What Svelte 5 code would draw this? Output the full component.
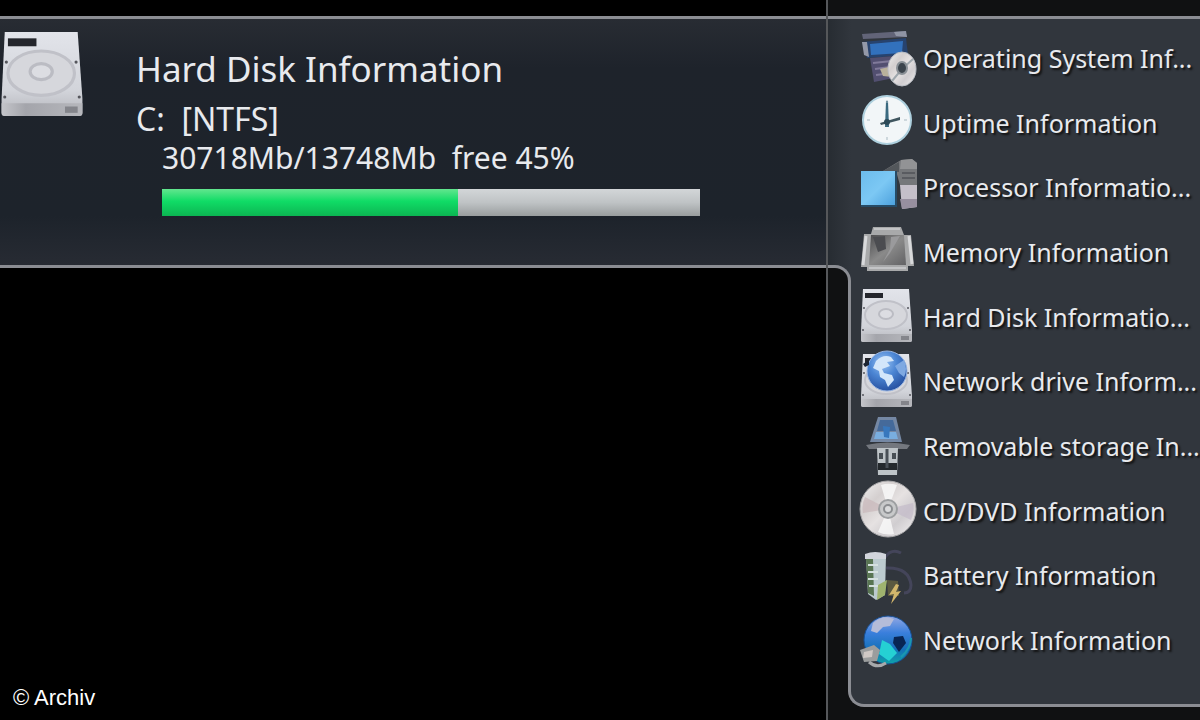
<script lang="ts">
	type Item = { icon: string; label: string };

	const items: Item[] = [
		{ icon: 'system', label: 'Operating System Inf...' },
		{ icon: 'clock', label: 'Uptime Information' },
		{ icon: 'processor', label: 'Processor Informatio...' },
		{ icon: 'memory', label: 'Memory Information' },
		{ icon: 'disk', label: 'Hard Disk Informatio...' },
		{ icon: 'netdrive', label: 'Network drive Inform...' },
		{ icon: 'usb', label: 'Removable storage In...' },
		{ icon: 'cd', label: 'CD/DVD Information' },
		{ icon: 'battery', label: 'Battery Information' },
		{ icon: 'network', label: 'Network Information' }
	];

	const drive = { name: 'C:', fs: '[NTFS]', total: 30718, used: 13748, free: 45 };
</script>

<!-- gradients shared by all icons -->
<svg class="defs" width="0" height="0" aria-hidden="true">
	<defs>
		<linearGradient id="metal" x1="0" y1="0" x2="0" y2="1">
			<stop offset="0" stop-color="#e2e4ea" />
			<stop offset="0.7" stop-color="#d2d4da" />
			<stop offset="1" stop-color="#b4b5bb" />
		</linearGradient>
		<linearGradient id="side" x1="0" y1="0" x2="1" y2="0">
			<stop offset="0" stop-color="#c4c5ca" />
			<stop offset="0.3" stop-color="#a4a5ab" />
			<stop offset="1" stop-color="#b6b7bc" />
		</linearGradient>
		<linearGradient id="screen" x1="0" y1="0" x2="1" y2="1">
			<stop offset="0" stop-color="#6cbcec" />
			<stop offset="0.5" stop-color="#7cc8f4" />
			<stop offset="1" stop-color="#4a9fdc" />
		</linearGradient>
		<linearGradient id="chip" x1="0" y1="0" x2="1" y2="1">
			<stop offset="0" stop-color="#4c4c4e" />
			<stop offset="0.5" stop-color="#8a8a8a" />
			<stop offset="1" stop-color="#626264" />
		</linearGradient>
		<linearGradient id="disc" x1="0" y1="0" x2="1" y2="1">
			<stop offset="0" stop-color="#f2f2f2" />
			<stop offset="0.3" stop-color="#d4cfcf" />
			<stop offset="0.5" stop-color="#e6e2e2" />
			<stop offset="0.7" stop-color="#d0cdd0" />
			<stop offset="1" stop-color="#f4f2f2" />
		</linearGradient>
		<radialGradient id="globe" cx="0.4" cy="0.3" r="0.75">
			<stop offset="0" stop-color="#9cc4f4" />
			<stop offset="0.45" stop-color="#4c86d4" />
			<stop offset="1" stop-color="#234c9c" />
		</radialGradient>
		<linearGradient id="earth" x1="0" y1="0" x2="0" y2="1">
			<stop offset="0" stop-color="#93a8e4" />
			<stop offset="0.35" stop-color="#3a7fdc" />
			<stop offset="0.7" stop-color="#1470b8" />
			<stop offset="1" stop-color="#0fa3a8" />
		</linearGradient>
	</defs>
</svg>

{#snippet disk()}
	<path d="M5 1 H51 L54 43 V52 Q54 54 52 54 H5 Q3 54 3 52 V43 Z" fill="url(#metal)" />
	<path d="M3 46 H54 V52 Q54 54 52 54 H5 Q3 54 3 52 Z" fill="url(#side)" />
	<ellipse cx="28" cy="27" rx="21" ry="14" fill="#d6d7dc" stroke="#c0c1c8" stroke-width="2" />
	<ellipse cx="28" cy="26" rx="7" ry="5" fill="#dcdde2" stroke="#bbbcc3" stroke-width="2" />
	<rect x="7" y="5" width="18" height="5" fill="#24262c" />
	<circle cx="6" cy="20" r="1" fill="#55565c" />
	<circle cx="50" cy="20" r="1" fill="#55565c" />
	<circle cx="5" cy="42" r="1" fill="#55565c" />
	<circle cx="52" cy="42" r="1" fill="#55565c" />
	<rect x="43" y="48" width="8" height="4" fill="#84858b" />
{/snippet}

<div class="desktop">
	<main>
		<section class="panel">
			<svg class="drive" viewBox="2 0 53 55" aria-hidden="true">{@render disk()}</svg>
			<div class="info">
				<h1>Hard Disk Information</h1>
				<p class="name">{drive.name}&nbsp; {drive.fs}</p>
				<div class="usage">
					<label for="space">{drive.total}Mb/{drive.used}Mb&nbsp; free {drive.free}%</label>
					<progress id="space" max="100" value={100 - drive.free}></progress>
				</div>
			</div>
		</section>
		<footer>© Archiv</footer>
	</main>

	<aside>
		<div class="notch">
			<div class="corner"></div>
		</div>
		<nav aria-label="System information">
			<ul>
				{#each items as item}
					<li>
						<a href="#{item.icon}">
							<svg viewBox="0 0 60 60" aria-hidden="true">
								{#if item.icon === 'system'}
									<path d="M4 5 L47 2 L49 8 L5 10 Z" fill="#626478" />
									<path d="M36 3 L48 2 L49 8 L38 7 Z" fill="#8f94a4" />
									<path d="M4 13 L48 9 L50 26 L9 29 Z" fill="#27436f" />
									<path d="M12 15 L45 12 L44 24 L13 26 Z" fill="#3271bd" />
									<path d="M4 13 L9 13 L11 28 L6 26 Z" fill="#9499a8" />
									<path d="M12 29 L36 27 L36 49 L16 53 Z" fill="#524f70" />
									<path d="M15 34 L34 32 M17 40 L32 38 M18 46 L34 44" stroke="#807a9a" stroke-width="2" />
									<path d="M22 40 L31 38 L34 48 L25 47 Z" fill="#b9b19c" />
									<ellipse cx="44" cy="40" rx="14" ry="17" fill="url(#disc)" stroke="#b9bdc4" />
									<path d="M44 40 L34 52 M44 40 L55 30" stroke="#9fa7ad" stroke-width="2" />
									<ellipse cx="44" cy="39" rx="5" ry="6" fill="#3c444c" stroke="#8a9096" stroke-width="2" />
								{:else if item.icon === 'clock'}
									<circle cx="29" cy="26" r="24" fill="#f2f6f8" stroke="#aed0de" stroke-width="2" />
									<path d="M28 7 L30 7 L31 33 L27 33 Z" fill="#3b6a80" />
									<path d="M22 29 L42 23 L42 26 L23 31 Z" fill="#40565f" />
									<circle cx="29" cy="28" r="3" fill="#2c4a58" />
									<path d="M29 6 V9 M29 43 V46 M9 26 H12 M46 26 H49" stroke="#a9bac2" />
								{:else if item.icon === 'processor'}
									<path d="M25 12 L43 1 L54 0 L59 4 V26 H42 L38 12 Z" fill="#75777a" />
									<path d="M43 1 L54 0 L59 4 V10 L42 10 Z" fill="#929395" />
									<path d="M25 12 L41 3 L41 13 Z" fill="#53575b" />
									<path d="M44 14 H57 M44 19 H57" stroke="#595b60" stroke-width="2" />
									<path d="M42 26 H59 V48 L44 50 Z" fill="#c4bfc9" />
									<path d="M42 40 H59 V48 L44 50 Z" fill="#978f9f" />
									<rect x="3" y="12" width="35" height="35" fill="url(#screen)" />
									<path d="M38 12 V47 H3" fill="none" stroke="#264b66" stroke-width="2" />
								{:else if item.icon === 'memory'}
									<path d="M15 4 H43 L46 12 H53 L56 43 H50 V48 H9 V44 H3 L6 11 H13 Z" fill="#a8a9aa" />
									<path d="M13 12 H46 L48 42 H11 Z" fill="url(#chip)" />
									<path d="M15 14 L27 13 L28 26 L20 29 Z" fill="#4b4c50" />
									<path d="M33 14 L42 13 L32 30 L25 39 L32 26 Z" fill="#9a9a9c" />
									<path d="M8 13 L5 42 M51 13 L54 41" stroke="#d8d9db" stroke-width="3" />
									<path d="M16 6 H42 M11 45 H48" stroke="#c3c4c6" stroke-width="2" />
								{:else if item.icon === 'disk'}
									{@render disk()}
								{:else if item.icon === 'netdrive'}
									{@render disk()}
									<circle cx="29" cy="18" r="20" fill="url(#globe)" stroke="#9ab6e2" />
									<path d="M18 8 Q25 1 33 4 L36 8 L29 9 L32 13 L24 16 L26 20 L34 22 L36 27 L30 34 L27 27 L22 24 L21 18 L15 15 Z" fill="#d3e6fa" />
									<path d="M37 13 L46 7 Q50 16 46 24 L41 20 Z" fill="#7fa9e2" />
									<path d="M5 11 L11 7 L11 12 L7 14 Z" fill="#1c2434" />
								{:else if item.icon === 'usb'}
									<path d="M20 -1 H38 L44 24 H12 Z" fill="#7588a4" />
									<path d="M22 2 H35 L38 13 H19 Z" fill="#456a9a" />
									<path d="M18 14 H38 L40 21 H16 Z" fill="#79aee0" />
									<path d="M25 8 L32 9 L31 20 L26 19 Z" fill="#3878bd" />
									<path d="M8 27 Q29 22 52 27 L49 31 H11 Z" fill="#73777e" />
									<path d="M19 30 H40 L39 57 H20 Z" fill="#bec4c8" />
									<path d="M20 45 H39 V52 H20 Z" fill="#24292d" />
									<path d="M29 31 V50" stroke="#495057" stroke-width="3" />
									<rect x="21" y="35" width="4" height="6" fill="#484f55" />
									<rect x="34" y="35" width="4" height="6" fill="#484f55" />
								{:else if item.icon === 'cd'}
									<circle cx="30" cy="27" r="28" fill="url(#disc)" stroke="#aaa9ab" />
									<path d="M30 27 L7 15 A26 26 0 0 0 5 31 Z" fill="#c9b8ba" opacity="0.7" />
									<path d="M30 27 L53 38 A26 26 0 0 0 55 21 Z" fill="#c3bac9" opacity="0.7" />
									<path d="M30 27 L23 3 A25 25 0 0 1 39 3 Z M30 27 L20 50 A25 25 0 0 0 36 52 Z" fill="#fafafa" opacity="0.8" />
									<circle cx="30" cy="27" r="9" fill="#c8c9ca" stroke="#9d9fa1" stroke-width="2" />
									<circle cx="30" cy="27" r="4" fill="#d9dadb" stroke="#8c8e91" stroke-width="2" />
								{:else if item.icon === 'battery'}
									<path d="M27 10 Q34 1 43 6 M28 21 Q51 20 53 38 Q53 46 46 46" fill="none" stroke="#44455a" stroke-width="3" />
									<path d="M8 8 H28 L27 48 L18 53 L10 47 Z" fill="#bccbcf" />
									<path d="M8 12 H15 L16 49 L10 46 Z" fill="#587452" />
									<path d="M10 18 H20 M10 25 H20 M10 32 H20 M11 39 H20" stroke="#d5e0df" stroke-width="2" />
									<path d="M7 7 Q17 3 28 7 V12 H7 Z" fill="#d2d5dc" />
									<path d="M20 38 L29 33 L27 48 L19 53 Z" fill="#9fb36e" />
									<path d="M29 33 L40 34 L41 49 L30 49 Z" fill="#5b5940" />
									<path d="M38 37 L31 48 L36 47 L33 57 L43 44 L38 45 L41 38 Z" fill="#d3b76c" />
								{:else}
									<circle cx="30" cy="28" r="24" fill="url(#earth)" stroke="#174f91" />
									<path d="M15 11 Q25 2 36 7 L32 14 L25 15 L19 21 L13 19 Z" fill="#b4bcd9" />
									<path d="M36 25 L45 24 L48 31 L41 40 L35 31 Z" fill="#082553" />
									<path d="M24 28 L32 32 L39 41 L31 49 L21 42 Z" fill="#25d0d3" />
									<path d="M43 45 Q53 36 53 26" fill="none" stroke="#1b98b0" stroke-width="2" />
									<path d="M2 38 L16 33 L22 38 L19 49 L6 50 Z" fill="#9b9d9d" />
									<path d="M6 40 L15 38 L14 45 L5 46 Z" fill="#d0c9c5" />
									<path d="M11 50 Q19 57 28 51" fill="none" stroke="#a7a9ab" stroke-width="3" />
								{/if}
							</svg>
							<span>{item.label}</span>
						</a>
					</li>
				{/each}
			</ul>
			<div class="end"></div>
		</nav>
	</aside>
</div>

<style>
	:global(body) {
		margin: 0;
		background: #000;
	}

	.defs {
		position: absolute;
	}

	.desktop {
		--line: #8b8d93;
		--glass: #31363d;
		--rail: #101112;
		display: grid;
		grid-template-columns: minmax(0, 1fr) 374px;
		min-height: 100vh;
		overflow: hidden;
		color: #e8eaee;
		font-family: 'Noto Sans', 'Open Sans', sans-serif;
	}

	main {
		display: flex;
		flex-direction: column;
		padding-top: 16px;
	}

	.panel {
		box-sizing: border-box;
		display: flex;
		align-items: flex-start;
		min-height: 252px;
		border-top: 3px solid var(--line);
		border-bottom: 3px solid var(--line);
		background: linear-gradient(#282c33, #1e232b 20%, #1d232b 80%, #272b33);
	}

	.drive {
		flex: none;
		width: 84px;
		height: 88px;
		margin: 11px 52px 0 0;
	}

	.info {
		flex: 1;
		padding-top: 28px;
	}

	h1,
	p {
		margin: 0;
		font-weight: 400;
	}

	h1 {
		font-size: 35px;
		line-height: 44px;
	}

	.name {
		font-size: 32px;
		line-height: 56px;
	}

	.usage {
		display: flex;
		flex-direction: column;
		padding-left: 26px;
	}

	label {
		font-size: 30px;
		line-height: 22px;
	}

	progress {
		appearance: none;
		width: 81%;
		height: 27px;
		margin-top: 20px;
		border: 0;
		background: #b4b8ba;
	}

	progress::-webkit-progress-bar {
		background: linear-gradient(#d3d6d8, #bfc3c5 50%, #999d9e);
	}

	progress::-webkit-progress-value {
		background: linear-gradient(#62e68e, #10dc66 45%, #0cb552);
	}

	footer {
		margin-top: auto;
		padding: 0 13px 8px;
		color: #fff;
		font-family: 'Liberation Sans', Arial, sans-serif;
		font-size: 22px;
		line-height: 28px;
	}

	aside {
		display: flex;
		box-sizing: border-box;
		padding: 16px 0 13px;
		border-left: 2px solid #55575a;
		background: var(--rail);
	}

	.notch {
		display: flex;
		width: 23px;
		margin: 0 -3px 20px 0;
		padding-top: 246px;
		border-top: 3px solid var(--line);
		background: linear-gradient(90deg, #272c32, var(--glass));
		z-index: 1;
	}

	.corner {
		flex: 1;
		border-top: 3px solid var(--line);
		border-right: 3px solid var(--line);
		border-top-right-radius: 16px;
		background: var(--rail);
	}

	nav {
		display: flex;
		flex: 1;
		flex-direction: column;
		min-width: 0;
		border-top: 3px solid var(--line);
	}

	ul {
		display: grid;
		flex: 1;
		grid-auto-rows: 1fr;
		margin: 0;
		padding: 8px 0 12px 10px;
		list-style: none;
		background: var(--glass);
	}

	.end {
		height: 18px;
		border-bottom: 3px solid var(--line);
		border-left: 3px solid var(--line);
		border-bottom-left-radius: 16px;
		background: var(--glass);
	}

	a {
		display: flex;
		align-items: center;
		gap: 5px;
		height: 100%;
		color: inherit;
		text-decoration: none;
		white-space: nowrap;
	}

	a:hover {
		color: #fff;
	}

	a svg {
		flex: none;
		width: 60px;
		height: 60px;
		overflow: visible;
	}

	span {
		padding-bottom: 3px;
		font-size: 25px;
		line-height: 32px;
		text-shadow: 2px 2px 2px #111;
	}
</style>
